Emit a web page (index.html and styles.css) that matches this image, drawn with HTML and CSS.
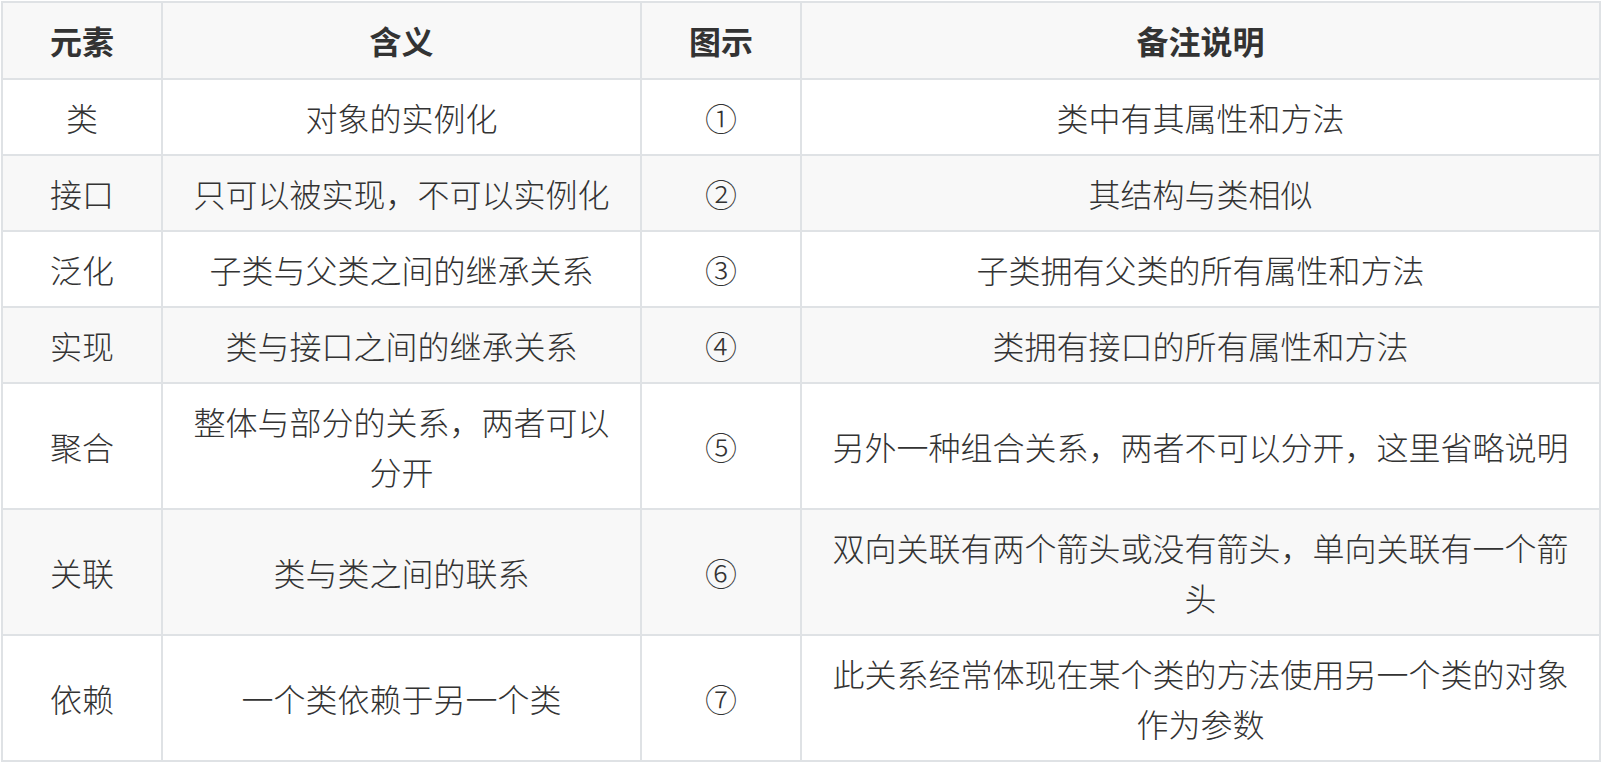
FILE: index.html
```html
<!DOCTYPE html>
<html lang="zh-CN">
<head>
<meta charset="utf-8">
<title>UML 关系</title>
<link rel="stylesheet" href="styles.css">
</head>
<body>
<table class="uml-table">
  <colgroup>
    <col class="c-elem">
    <col class="c-mean">
    <col class="c-icon">
    <col class="c-note">
  </colgroup>
  <thead>
    <tr>
      <th>元素</th>
      <th>含义</th>
      <th>图示</th>
      <th>备注说明</th>
    </tr>
  </thead>
  <tbody>
    <tr><td>类</td><td>对象的实例化</td><td>①</td><td>类中有其属性和方法</td></tr>
    <tr><td>接口</td><td>只可以被实现，不可以实例化</td><td>②</td><td>其结构与类相似</td></tr>
    <tr><td>泛化</td><td>子类与父类之间的继承关系</td><td>③</td><td>子类拥有父类的所有属性和方法</td></tr>
    <tr><td>实现</td><td>类与接口之间的继承关系</td><td>④</td><td>类拥有接口的所有属性和方法</td></tr>
    <tr><td>聚合</td><td>整体与部分的关系，两者可以分开</td><td>⑤</td><td>另外一种组合关系，两者不可以分开，这里省略说明</td></tr>
    <tr><td>关联</td><td>类与类之间的联系</td><td>⑥</td><td>双向关联有两个箭头或没有箭头，单向关联有一个箭头</td></tr>
    <tr><td>依赖</td><td>一个类依赖于另一个类</td><td>⑦</td><td>此关系经常体现在某个类的方法使用另一个类的对象作为参数</td></tr>
  </tbody>
</table>
</body>
</html>
```

FILE: styles.css
```css
html, body {
  margin: 0;
  padding: 0;
  background: #ffffff;
}

body {
  padding: 1px;
  font-family: "Noto Sans CJK SC", "Noto Sans", sans-serif;
  color: #333333;
}

.uml-table {
  width: 1600px;
  border-collapse: collapse;
  table-layout: fixed;
  font-size: 32px;
  line-height: 50px;
}

.c-elem { width: 160px; }
.c-mean { width: 479px; }
.c-icon { width: 160px; }
.c-note { width: 799px; }

.uml-table th,
.uml-table td {
  border: 2px solid #dfe2e5;
  padding: 12px 26px;
  text-align: center;
  vertical-align: middle;
}

.uml-table th {
  font-weight: 700;
  padding-bottom: 13px;
  background: #f8f8f8;
}

.uml-table td {
  font-weight: 300;
}

.uml-table tbody tr:nth-child(2n) {
  background: #f8f8f8;
}
```
